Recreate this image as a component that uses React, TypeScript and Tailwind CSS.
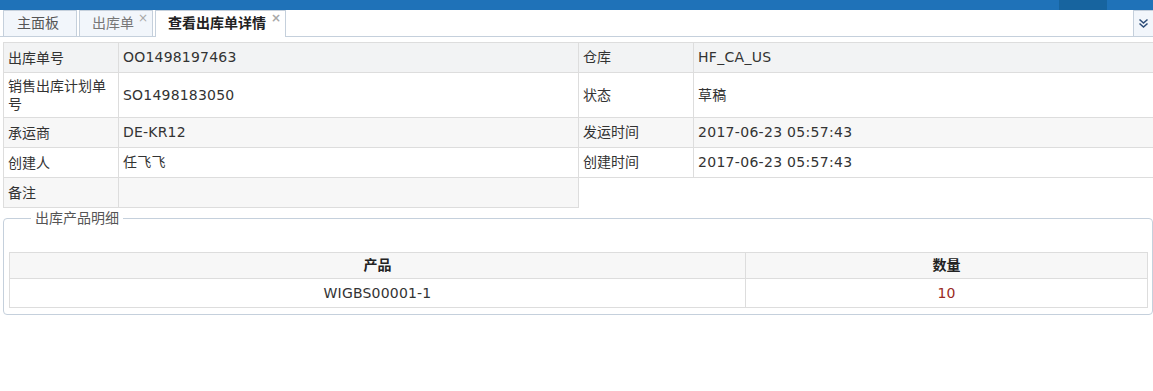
import React from "react";

const font = { fontFamily: '"DejaVu Sans", "Noto Sans CJK SC", sans-serif' };

function CloseX() {
  return (
    <span className="absolute right-[4px] top-[1px] text-[12px] leading-[12px] text-[#a8a8a8]">×</span>
  );
}

export default function App() {
  const rows: { cells: [string, string, string?, string?]; bg: string; h: string }[] = [
    { cells: ["出库单号", "OO1498197463", "仓库", "HF_CA_US"], bg: "bg-[#f2f3f4]", h: "h-[30px]" },
    { cells: ["销售出库计划单号", "SO1498183050", "状态", "草稿"], bg: "bg-white", h: "h-[45px]" },
    { cells: ["承运商", "DE-KR12", "发运时间", "2017-06-23 05:57:43"], bg: "bg-[#f7f7f7]", h: "h-[30px]" },
    { cells: ["创建人", "任飞飞", "创建时间", "2017-06-23 05:57:43"], bg: "bg-white", h: "h-[30px]" },
    { cells: ["备注", ""], bg: "bg-[#f7f7f7]", h: "h-[30px]" },
  ];
  return (
    <div className="w-[1153px] h-[391px] bg-white text-[14px] text-[#333] overflow-hidden" style={font}>
      {/* top bar */}
      <div className="h-[10px] bg-[#1f72b8] flex">
        <div className="flex-1" />
        <div className="w-[48px] bg-[#17649f]" />
        <div className="w-[46px]" />
      </div>
      {/* tabs */}
      <div className="relative h-[27px] border-b border-[#c5d0dc] flex items-end">
        <div className="flex items-end pl-[3px] h-full">
          <div className="relative h-[26px] w-[74px] mr-[2px] bg-[#f2f6fb] border border-b-0 border-[#c5d0dc] text-[#555] flex items-center pl-[13px]">
            主面板
          </div>
          <div className="relative h-[26px] w-[74px] mr-[2px] bg-[#f2f6fb] border border-b-0 border-[#c5d0dc] text-[#777] flex items-center pl-[12px]">
            出库单
            <CloseX />
          </div>
          <div className="relative h-[27px] w-[131px] bg-white border border-b-0 border-[#c5d0dc] text-[#222] font-bold flex items-center pl-[12px] -mb-[1px] pb-[1px]">
            查看出库单详情
            <CloseX />
          </div>
        </div>
        <div className="flex-1" />
        <div className="h-[26px] w-[20px] bg-[#f2f6fb] border-l border-t border-[#c5d0dc] flex items-center justify-center">
          <svg width="11" height="11" viewBox="0 0 11 11" fill="none" stroke="#2f4f7a" strokeWidth="1.6">
            <path d="M1.5 1.5 L5.5 5 L9.5 1.5" />
            <path d="M1.5 5.5 L5.5 9 L9.5 5.5" />
          </svg>
        </div>
      </div>
      {/* info table */}
      <div className="pl-[3px] pt-[5px]">
        <table className="border-collapse table-fixed w-[1150px]">
          <colgroup>
            <col className="w-[115px]" />
            <col className="w-[460px]" />
            <col className="w-[115px]" />
            <col className="w-[460px]" />
          </colgroup>
          <tbody>
            {rows.map((r, i) => (
              <tr key={i} className={`${r.h}`}>
                <td className={`${r.bg} border border-[#dddddd] px-[4px] leading-[18px] align-middle`}>{r.cells[0]}</td>
                <td className={`${r.bg} border border-[#dddddd] px-[4px] tracking-[0.2px] align-middle`}>{r.cells[1]}</td>
                {r.cells.length > 2 && (
                  <>
                    <td className={`${r.bg} border border-[#dddddd] px-[4px] align-middle`}>{r.cells[2]}</td>
                    <td className={`${r.bg} border border-[#dddddd] px-[4px] tracking-[0.3px] align-middle`}>{r.cells[3]}</td>
                  </>
                )}
              </tr>
            ))}
          </tbody>
        </table>
      </div>
      {/* fieldset */}
      <fieldset className="ml-[3px] w-[1150px] border border-[#c5d0dc] rounded-[4px] pl-[5px] pr-[4px] pb-[6px] pt-[24px]">
        <legend className="ml-[22px] px-[4px] text-[#555] leading-[20px]">出库产品明细</legend>
        <table className="w-full border-collapse table-fixed">
          <colgroup>
            <col className="w-[736px]" />
            <col />
          </colgroup>
          <thead>
            <tr className="h-[26px] bg-[#f7f7f7]">
              <th className="border border-[#dddddd] font-bold text-center text-[#222]">产品</th>
              <th className="border border-[#dddddd] font-bold text-center text-[#222]">数量</th>
            </tr>
          </thead>
          <tbody>
            <tr className="h-[29px]">
              <td className="border border-[#dddddd] text-center tracking-[0.2px]">WIGBS00001-1</td>
              <td className="border border-[#dddddd] text-center text-[#9a2a22]">10</td>
            </tr>
          </tbody>
        </table>
      </fieldset>
    </div>
  );
}
